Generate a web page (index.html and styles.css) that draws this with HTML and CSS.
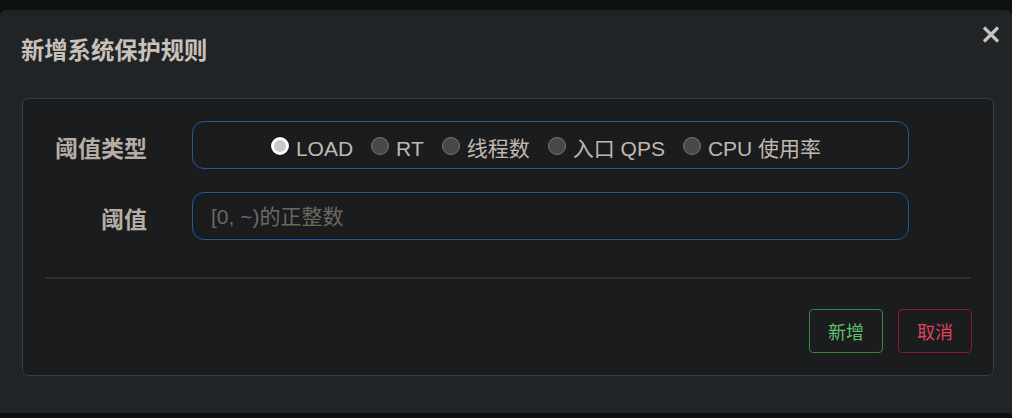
FILE: index.html
```html
<!DOCTYPE html>
<html lang="zh-CN">
<head>
<meta charset="utf-8">
<title>新增系统保护规则</title>
<link rel="stylesheet" href="styles.css">
</head>
<body>
<div class="modal">
  <div class="modal-header">
    <h3 class="modal-title">新增系统保护规则</h3>
    <button class="close" aria-label="关闭">
      <svg width="18" height="17" viewBox="0 0 18 17"><path d="M2 1.5 L16 15.5 M16 1.5 L2 15.5" stroke="#c9c3bc" stroke-width="3.2" stroke-linecap="butt"/></svg>
    </button>
  </div>
  <div class="panel">
    <div class="form">
      <div class="row">
        <label class="label">阈值类型</label>
        <div class="field radios">
          <span class="radio"><span class="dot checked"></span><span class="rtext">LOAD</span></span>
          <span class="radio"><span class="dot"></span><span class="rtext">RT</span></span>
          <span class="radio"><span class="dot"></span><span class="rtext">线程数</span></span>
          <span class="radio"><span class="dot"></span><span class="rtext">入口 QPS</span></span>
          <span class="radio"><span class="dot"></span><span class="rtext">CPU 使用率</span></span>
        </div>
      </div>
      <div class="row">
        <label class="label">阈值</label>
        <div class="field input"><span class="placeholder">[0, ~)的正整数</span></div>
      </div>
    </div>
    <div class="sep"></div>
    <div class="footer">
      <button class="btn btn-ok">新增</button>
      <button class="btn btn-cancel">取消</button>
    </div>
  </div>
</div>
</body>
</html>
```
FILE: styles.css
```css
html, body {
  margin: 0;
  padding: 0;
  background: #0f1111;
  font-family: "Liberation Sans", "Noto Sans CJK SC", sans-serif;
}
.modal {
  position: relative;
  margin-top: 10px;
  height: 403px;
  box-sizing: border-box;
  background: #212427;
  border-radius: 6px 6px 0 0;
  padding: 0 18px 0 22px;
}
.modal-header {
  padding: 26px 0 0 0;
  height: 63px;
  box-sizing: border-box;
}
.modal-title {
  margin: 0 0 0 -1px;
  font-size: 23.3px;
  line-height: 30px;
  font-weight: bold;
  color: #c9c2ba;
}
.close {
  position: absolute;
  top: 16px;
  right: 12px;
  width: 18px;
  height: 17px;
  padding: 0;
  border: 0;
  background: transparent;
}
.close svg { display: block; }
.panel {
  margin-top: 25px;
  height: 278px;
  box-sizing: border-box;
  border: 1px solid #3a3d40;
  border-radius: 6px;
  background: #1b1c1e;
}
.form {
  padding: 22px 84px 0 0;
  display: flex;
  flex-direction: column;
  gap: 23px;
}
.row {
  display: flex;
  align-items: center;
  gap: 45px;
}
.label {
  width: 124px;
  text-align: right;
  font-size: 23px;
  font-weight: bold;
  color: #b6aea4;
  padding-top: 8px;
  line-height: 30px;
}
.field {
  flex: 1;
  height: 48px;
  box-sizing: border-box;
  border: 1px solid #1f5d9b;
  border-radius: 12px;
}
.radios {
  display: flex;
  align-items: center;
  justify-content: center;
  gap: 18px;
  padding: 4px 9px 0 0;
}
.radio {
  display: flex;
  align-items: center;
  gap: 7px;
}
.dot {
  width: 18px;
  height: 18px;
  box-sizing: border-box;
  border-radius: 50%;
  background: #484848;
  border: 1px solid #767676;
  margin-top: -2px;
}
.dot.checked {
  background: #c8c8c8;
  border: 3px solid #ffffff;
  box-shadow: 0 0 0 1px #111;
}
.rtext {
  font-size: 21px;
  line-height: 26px;
  color: #c0b9b0;
  padding-top: 4px;
}
.input {
  display: flex;
  align-items: center;
  padding-left: 18px;
}
.placeholder {
  font-size: 21px;
  color: #6b6863;
  margin-top: -3px;
}
.sep {
  margin: 37px 22px 0 22px;
  height: 2px;
  background: #2c2e31;
}
.footer {
  display: flex;
  justify-content: flex-end;
  gap: 15px;
  padding: 30px 21px 0 0;
}
.btn {
  width: 74px;
  height: 44px;
  box-sizing: border-box;
  background: transparent;
  border-radius: 4px;
  font-family: "Liberation Sans", "Noto Sans CJK SC", sans-serif;
  font-size: 18px;
  padding: 0;
}
.btn-ok {
  border: 1px solid #2e8a3e;
  color: #5ec36c;
}
.btn-cancel {
  border: 1px solid #871c2a;
  color: #df4458;
}
```
